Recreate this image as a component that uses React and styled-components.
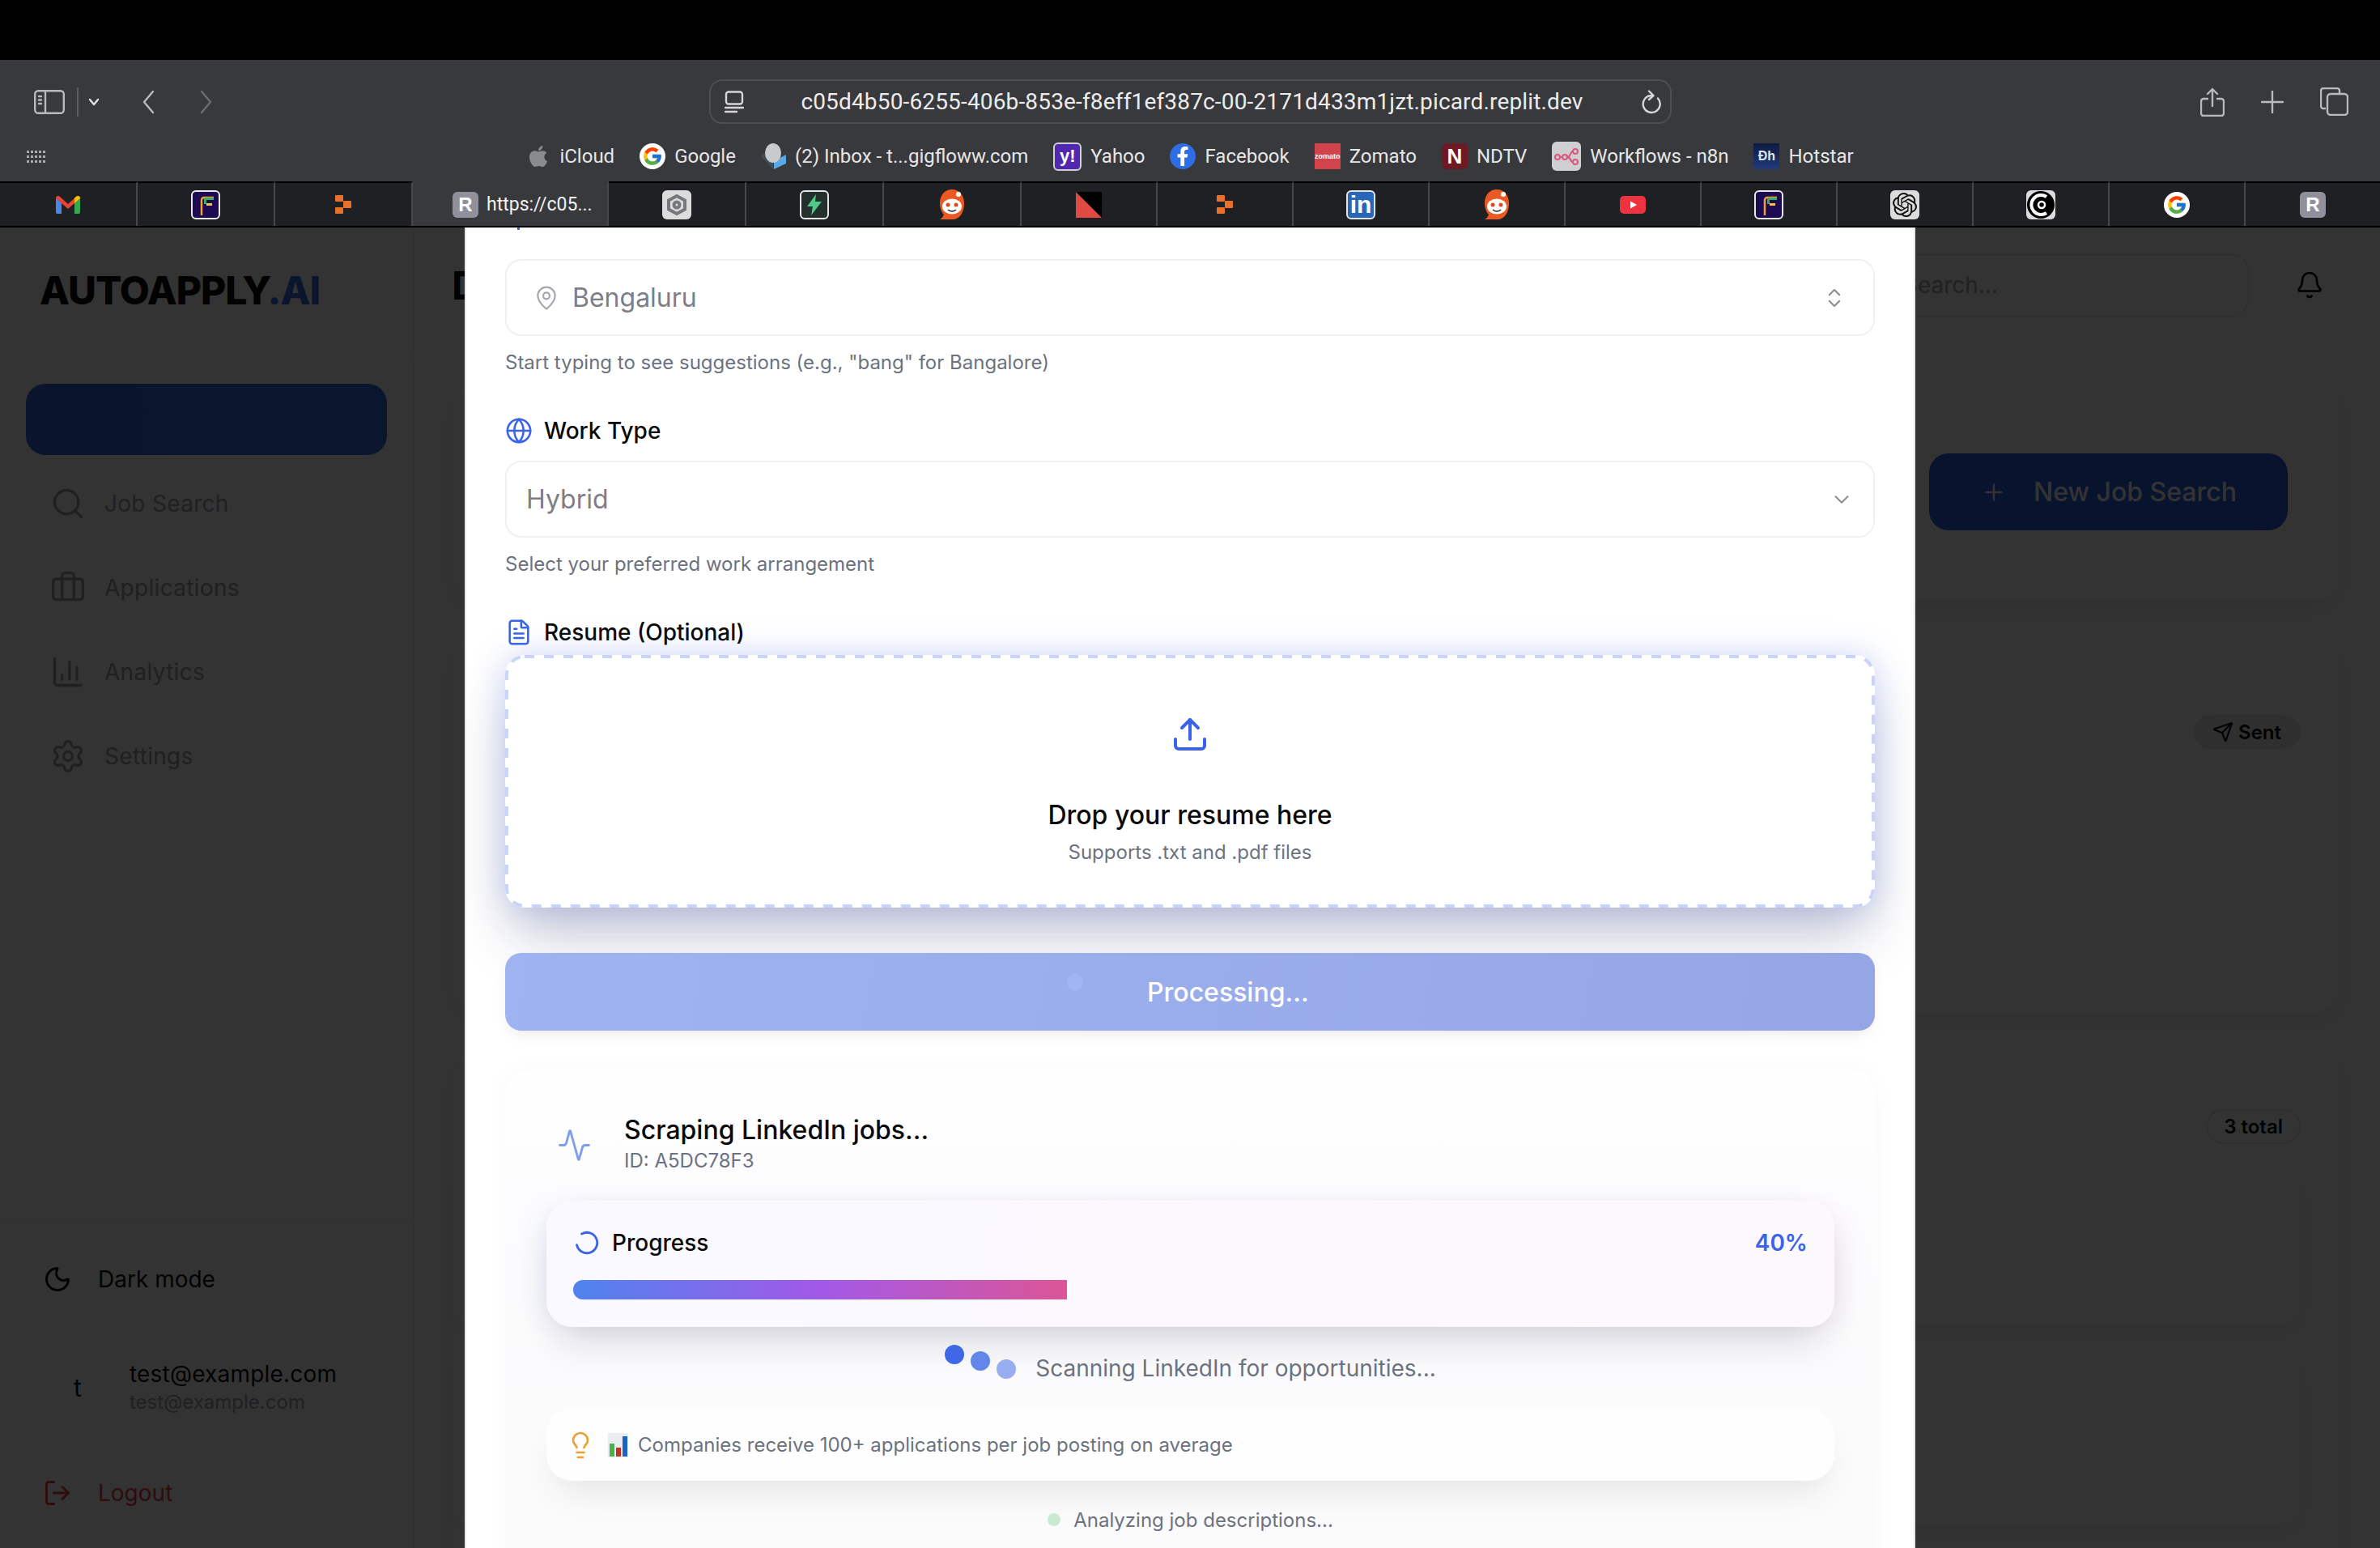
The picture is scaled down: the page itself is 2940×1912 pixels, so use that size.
import React from 'react';
import styled, { createGlobalStyle } from 'styled-components';
import {
  Activity, Bell, Briefcase, ChartColumn, ChevronDown, ChevronsUpDown, FileText, Globe, Lightbulb,
  LoaderCircle, LogOut, MapPin, Moon, Plus, Search, Send, Settings, Upload,
} from 'lucide-react';
import { FaApple, FaFacebookF } from 'react-icons/fa';
import { FcGoogle } from 'react-icons/fc';
import { SiOpenai } from 'react-icons/si';

const GlobalStyle = createGlobalStyle`
  html, body {
    margin: 0;
    padding: 0;
    background: #000;
  }
  * {
    box-sizing: border-box;
  }
`;

const Shell = styled.div`
  width: 2940px;
  height: 1912px;
  overflow: hidden;
  display: flex;
  flex-direction: column;
  font-family: Inter, sans-serif;
`;

const Notch = styled.div`
  flex: 0 0 74px;
  background: #000;
`;

/* browser chrome */
const Toolbar = styled.div`
  flex: 0 0 150px;
  background: #38393d;
  display: flex;
  flex-direction: column;
  font-family: Roboto, sans-serif;
  color: #e6e6e7;
`;

const NavRow = styled.div`
  flex: 0 0 92px;
  padding-top: 24px;
  display: grid;
  grid-template-columns: 1fr 1189px 1fr;
  align-items: start;
`;

const NavLeft = styled.div`
  height: 55px;
  padding-left: 42px;
  display: flex;
  align-items: center;
`;

const NavRight = styled.div`
  height: 55px;
  padding-right: 39px;
  display: flex;
  align-items: center;
  justify-content: flex-end;
  gap: 45px;
`;

const ChromeIcon = styled.svg`
  display: block;
  flex: none;
  fill: none;
  stroke: ${(p) => p.$color || '#b9babc'};
  stroke-width: 2.4;
  stroke-linecap: round;
  stroke-linejoin: round;
  margin-left: ${(p) => p.$ml || 0}px;
`;

const AddressBar = styled.div`
  height: 55px;
  border: 2px solid #4e4f53;
  border-radius: 16px;
  padding: 0 10px 0 17px;
  display: flex;
  align-items: center;
`;

const Url = styled.span`
  flex: 1;
  text-align: center;
  font-size: 28px;
  letter-spacing: 0.16px;
  color: #ececed;
  white-space: nowrap;
`;

const BookmarkRow = styled.div`
  flex: 0 0 54px;
  display: grid;
  grid-template-columns: 1fr auto 1fr;
  align-items: center;
`;

const AppsDots = styled.div`
  margin-left: 33px;
  width: 24px;
  display: grid;
  grid-template-columns: repeat(5, 3px);
  gap: 3px 2px;
`;

const AppsDot = styled.i`
  width: 3px;
  height: 3px;
  background: #a9aaad;
`;

const Bookmarks = styled.div`
  display: flex;
  align-items: center;
  gap: 31px;
`;

const Bookmark = styled.div`
  display: flex;
  align-items: center;
  gap: 11px;
  font-size: 24px;
  white-space: nowrap;
`;

const Tile = styled.div`
  width: ${(p) => p.$size || 32}px;
  height: ${(p) => p.$h || p.$size || 32}px;
  flex: none;
  border-radius: ${(p) => p.$radius ?? 6}px;
  background: ${(p) => p.$bg || 'transparent'};
  border: ${(p) => (p.$ring ? `2px solid ${p.$ring}` : 'none')};
  color: ${(p) => p.$fg || '#fff'};
  font-size: ${(p) => p.$font || 22}px;
  font-weight: 700;
  font-family: 'Liberation Sans', sans-serif;
  line-height: 1;
  overflow: hidden;
  display: flex;
  align-items: center;
  justify-content: center;
`;

const TabBar = styled.div`
  flex: 0 0 57px;
  display: flex;
  background: #1f2023;
  border-bottom: 2px solid #000;
  font-family: Roboto, sans-serif;
`;

const Tab = styled.div`
  flex: ${(p) => (p.$wide ? '0 0 170px' : '1 1 0')};
  border-top: 2px solid #000;
  border-right: 2px solid #47484b;
  display: flex;
  align-items: center;
  justify-content: center;
  &:last-child {
    border-right: none;
  }
`;

const ActiveTab = styled.div`
  flex: 0 0 242px;
  background: #38393d;
  border-top: 2px solid #38393d;
  border-right: 2px solid #47484b;
  padding-left: 49px;
  display: flex;
  align-items: center;
  gap: 10px;
  color: #f0f0f1;
  font-size: 23px;
  white-space: nowrap;
`;

/* dimmed dashboard behind the dialog */
const Page = styled.div`
  flex: 1;
  min-height: 0;
  position: relative;
  display: flex;
  background: #fff;
  overflow: hidden;
`;

const Sidebar = styled.aside`
  flex: 0 0 512px;
  border-right: 2px solid #f2f2f3;
  display: flex;
  flex-direction: column;
`;

const LogoBlock = styled.div`
  flex: 0 0 160px;
  padding: 0 0 4px 49px;
  display: flex;
  align-items: center;
  border-bottom: 2px solid #f2f2f3;
`;

const Logo = styled.div`
  font-size: 48px;
  font-weight: 800;
  letter-spacing: -1px;
  color: #0a0a0a;
  span {
    color: #3b71e6;
  }
`;

const Nav = styled.nav`
  padding: 33px 32px 0 32px;
  display: flex;
  flex-direction: column;
  gap: 16px;
`;

const NavItem = styled.div`
  height: 88px;
  border-radius: 24px;
  padding-left: 30px;
  display: flex;
  align-items: center;
  gap: 23px;
  font-size: 28px;
  letter-spacing: 0.3px;
  color: #9da0aa;
  background: ${(p) => (p.$active ? 'linear-gradient(90deg, #3269e1, #3470e6)' : 'transparent')};
`;

const SidebarFoot = styled.div`
  margin-top: auto;
  border-top: 2px solid #f2f2f3;
  padding: 25px 0 24px 53px;
  display: flex;
  flex-direction: column;
`;

const FootRow = styled.div`
  height: 88px;
  display: flex;
  align-items: center;
  gap: 32px;
  font-size: 28px;
  color: ${(p) => p.$color || '#0a0a0a'};
`;

const UserRow = styled.div`
  height: 88px;
  margin: 46px 0 42px 11px;
  display: flex;
  align-items: center;
  gap: 32px;
`;

const Avatar = styled.div`
  width: 64px;
  height: 64px;
  display: flex;
  align-items: center;
  justify-content: center;
  font-size: 30px;
  color: #0a0a0a;
`;

const UserMail = styled.div`
  font-size: 28px;
  line-height: 36px;
  letter-spacing: 0.2px;
  color: #0a0a0a;
`;

const UserSub = styled.div`
  font-size: 24px;
  line-height: 34px;
  color: #9ea1aa;
`;

const Main = styled.main`
  flex: 1;
  min-width: 0;
  display: flex;
  flex-direction: column;
`;

const MainHeader = styled.header`
  flex: 0 0 144px;
  padding: 0 51px 0 46px;
  border-bottom: 2px solid #f2f2f3;
  display: flex;
  align-items: center;
  justify-content: space-between;
`;

const PageTitle = styled.h1`
  margin: 0;
  font-size: 48px;
  font-weight: 700;
  color: #0a0a0a;
`;

const HeaderTools = styled.div`
  display: flex;
  align-items: center;
  gap: 38px;
`;

const SearchBox = styled.div`
  width: 513px;
  height: 79px;
  padding-left: 83px;
  border: 2px solid #ecedef;
  border-radius: 24px;
  display: flex;
  align-items: center;
  font-size: 28px;
  color: #a0a3ad;
`;

const BellButton = styled.div`
  width: 72px;
  display: flex;
  justify-content: center;
  color: #000;
`;

const Content = styled.div`
  padding: 48px 49px 0 48px;
  display: flex;
  flex-direction: column;
  gap: 48px;
`;

const Card = styled.section`
  height: ${(p) => p.$h}px;
  flex: none;
  border-radius: 32px;
  background: #fff;
  box-shadow: 0 10px 30px rgba(0, 0, 0, 0.07);
  padding: ${(p) => p.$pad || '0 49px 0 0'};
  display: flex;
  flex-direction: column;
  align-items: flex-end;
`;

const HeroCard = styled(Card)`
  justify-content: center;
  padding-right: 65px;
`;

const NewSearchButton = styled.div`
  width: 443px;
  height: 95px;
  border-radius: 24px;
  background: linear-gradient(100deg, #2a66e6, #2a5de0);
  color: #fff;
  font-size: 32px;
  font-weight: 500;
  display: flex;
  align-items: center;
  padding-left: 64px;
  gap: 33px;
`;

const Badge = styled.div`
  height: ${(p) => p.$h}px;
  padding: 0 ${(p) => p.$px}px;
  border-radius: 22px;
  border: 2px solid ${(p) => (p.$outline ? '#e8e8ea' : 'transparent')};
  background: ${(p) => (p.$outline ? 'transparent' : '#ececee')};
  display: flex;
  align-items: center;
  gap: 6px;
  font-size: 24px;
  font-weight: 600;
  color: #0a0a0a;
`;

const SubCard = styled.div`
  flex: none;
  width: 100%;
  height: ${(p) => p.$h}px;
  margin-top: ${(p) => p.$mt}px;
  border-radius: 24px;
  background: #fff;
  box-shadow: 0 10px 30px rgba(0, 0, 0, 0.06);
`;

const Scrim = styled.div`
  position: absolute;
  inset: 0;
  background: rgba(0, 0, 0, 0.8);
`;

/* dialog, scrolled part way down */
const Dialog = styled.div`
  position: absolute;
  top: 0;
  bottom: 0;
  left: 574px;
  width: 1792px;
  background: #fff;
  border: 2px solid #e6e7ea;
  border-width: 0 2px;
  padding: 39px 48px 0;
  overflow: hidden;
`;

const ScrollTip = styled.i`
  position: absolute;
  top: 0;
  left: 63px;
  width: 3px;
  height: 3px;
  background: #3b63e8;
`;

const Field = styled.div`
  height: 95px;
  margin-top: ${(p) => p.$mt || 0}px;
  border: 2px solid #f1f1f3;
  border-radius: 20px;
  padding: 0 ${(p) => p.$pr}px 0 ${(p) => p.$pl}px;
  display: flex;
  align-items: center;
  gap: 16px;
  font-size: 32px;
  color: #7d7e86;
`;

const FieldValue = styled.span`
  flex: 1;
`;

const Helper = styled.div`
  margin-top: 15px;
  font-size: 24px;
  line-height: 36px;
  color: #6b7280;
`;

const Label = styled.div`
  margin-top: 48px;
  height: 36px;
  display: flex;
  align-items: center;
  gap: 14px;
  font-size: 28px;
  font-weight: 500;
  color: #0a0a0a;
`;

const Dropzone = styled.div`
  position: relative;
  margin-top: 10px;
  height: 312px;
  border-radius: 24px;
  background: #fff;
  box-shadow: 0 0 40px rgba(88, 120, 240, 0.26), 0 40px 70px -10px rgba(30, 40, 90, 0.28);
  display: flex;
  flex-direction: column;
  align-items: center;
  padding-top: 74px;
  color: #3b63e8;
`;

const DashFrame = styled.svg`
  position: absolute;
  inset: 0;
  fill: none;
  stroke: #c9d4f8;
  stroke-width: 4;
  stroke-dasharray: 12 12;
`;

const DropTitle = styled.div`
  margin-top: 54px;
  font-size: 32px;
  line-height: 44px;
  font-weight: 500;
  color: #0a0a0a;
`;

const DropHint = styled.div`
  margin-top: 6px;
  font-size: 24px;
  line-height: 36px;
  color: #6b7280;
`;

const SubmitButton = styled.div`
  position: relative;
  margin-top: 56px;
  height: 96px;
  border-radius: 20px;
  background: linear-gradient(100deg, #9fb3f1, #95a6e5);
  box-shadow: 0 8px 20px -6px rgba(0, 0, 0, 0.1);
  padding-left: 793px;
  display: flex;
  align-items: center;
  font-size: 32px;
  font-weight: 500;
  color: #fff;
`;

const FaintDot = styled.i`
  position: absolute;
  left: ${(p) => p.$x}px;
  top: ${(p) => p.$y}px;
  width: 20px;
  height: 20px;
  border-radius: 50%;
  background: ${(p) => p.$color};
`;

const ProgressPanel = styled.section`
  margin-top: 48px;
  height: 760px;
  border-radius: 32px;
  background: linear-gradient(180deg, #fff 0%, #fcfcfe 22%, #fafafb 100%);
  box-shadow: 0 0 30px rgba(0, 0, 0, 0.03);
  padding: 55px 50px 0 51px;
`;

const PanelHead = styled.div`
  padding-left: 13px;
  display: flex;
  align-items: center;
  gap: 40px;
  color: #7f9cf0;
`;

const PanelTitle = styled.div`
  font-size: 32px;
  line-height: 40px;
  font-weight: 500;
  color: #0a0a0a;
`;

const PanelId = styled.div`
  font-size: 24px;
  line-height: 36px;
  color: #6b7280;
`;

const ProgressCard = styled.div`
  margin-top: 31px;
  height: 156px;
  border-radius: 32px;
  padding: 32px 33px 34px;
  background: linear-gradient(100deg, #f9f9ff, #fdf8fc);
  box-shadow: 0 25px 50px -12px rgba(20, 20, 50, 0.18), -14px 0 34px -10px rgba(59, 100, 246, 0.08),
    14px 0 34px -10px rgba(236, 72, 153, 0.08);
`;

const ProgressTop = styled.div`
  height: 40px;
  display: flex;
  align-items: center;
  gap: 14px;
  font-size: 28px;
  font-weight: 500;
  color: #0a0a0a;
  svg {
    transform: rotate(-120deg);
    color: #3b63e8;
  }
`;

const Percent = styled.span`
  margin-left: auto;
  font-weight: 600;
  color: #3b63e8;
`;

const Track = styled.div`
  margin-top: 26px;
  height: 24px;
  border-radius: 12px 0 0 12px;
`;

const Fill = styled.div`
  height: 100%;
  border-radius: 12px 0 0 12px;
  background: linear-gradient(90deg, #4f83ee, #a259e8 50%, #dc5596);
`;

const StatusRow = styled.div`
  margin-top: 31px;
  height: 40px;
  display: flex;
  align-items: center;
  justify-content: center;
  font-size: 28px;
  color: #6b7280;
`;

const BounceDot = styled.i`
  width: 24px;
  height: 24px;
  margin-right: ${(p) => p.$mr}px;
  border-radius: 50%;
  background: ${(p) => p.$color};
  transform: translateY(${(p) => p.$y}px);
`;

const TipCard = styled.div`
  margin-top: 30px;
  height: 89px;
  border-radius: 32px;
  padding-left: 24px;
  background: #fefefe;
  box-shadow: 0 24px 44px -14px rgba(0, 0, 0, 0.1);
  display: flex;
  align-items: center;
  font-size: 24px;
  color: #6b7280;
  svg {
    flex: none;
  }
`;

const TipBulb = styled.div`
  display: flex;
  color: #ef9f2e;
  margin-right: 16px;
`;

const TipChart = styled.svg`
  margin: 0 12px 0 0;
`;

const StepRow = styled.div`
  margin-top: 30px;
  height: 36px;
  display: flex;
  align-items: center;
  justify-content: center;
  gap: 16px;
  font-size: 24px;
  color: #6b7280;
`;

const StepDot = styled.i`
  width: 16px;
  height: 16px;
  border-radius: 50%;
  background: #c9e9d1;
`;

const OrangeMark = () => (
  <svg width="20" height="23" viewBox="0 0 20 23">
    <g fill="#e8702a">
      <rect x="0" y="0" width="10" height="8" rx="1" />
      <rect x="10" y="7" width="10" height="9" rx="1" />
      <rect x="0" y="15" width="10" height="8" rx="1" />
    </g>
  </svg>
);

const GmailMark = () => (
  <svg width="30" height="22" viewBox="0 0 30 22">
    <path d="M0 3v17a2 2 0 0 0 2 2h5V6z" fill="#4a86e8" />
    <path d="M30 3v17a2 2 0 0 1-2 2h-5V6z" fill="#34a853" />
    <path d="M0 3c0-3 3-4 5-2l10 9 10-9c2-2 5-1 5 2L15 16z" fill="#ea4335" />
    <path d="M23 2.500l2-1.500c2-2 5-1 5 2l-7 6z" fill="#fbbc04" />
  </svg>
);

const FlowMark = () => (
  <Tile $size={36} $bg="#1c0b52" $ring="#e9e9ea">
    <svg width="24" height="30" viewBox="0 0 24 30">
      <path d="M7 28V9a3 3 0 0 1 3-3h12" stroke="#f0a02c" strokeWidth="2.500" fill="none" />
      <path d="M10 14V8a2 2 0 0 1 2-2h10v3H13v5z" fill="#3ea86b" />
      <path d="M13 13h7v3h-7z" fill="#f5c542" />
    </svg>
  </Tile>
);

const RMark = () => (
  <Tile $bg="#8f909c" $font={24}>R</Tile>
);

const HexMark = () => (
  <Tile $size={36} $bg="#dcdcdc">
    <svg width="28" height="28" viewBox="0 0 28 28" fill="none" stroke="#77787c" strokeWidth="4">
      <path d="M14 3l10 5.500v11L14 25 4 19.500v-11z" />
      <circle cx="14" cy="14" r="3.500" />
    </svg>
  </Tile>
);

const BoltMark = () => (
  <Tile $size={36} $bg="#23302b" $ring="#e5e5e6">
    <svg width="22" height="26" viewBox="0 0 22 26">
      <path d="M13 0L2 15h7l-2 11 13-17h-8z" fill="#4ec98a" />
    </svg>
  </Tile>
);

const RedditMark = () => (
  <svg width="32" height="38" viewBox="0 0 32 38">
    <path d="M16 0C7 0 1 7 1 17c0 6 2 11 5 14-1 3-3 5-5 6h17c8-1 13-9 13-20C31 7 25 0 16 0z" fill="#ec5a24" />
    <ellipse cx="16" cy="21" rx="12" ry="9.500" fill="#fff" />
    <circle cx="11" cy="19" r="2.500" fill="#e0491c" />
    <circle cx="21" cy="19" r="2.500" fill="#e0491c" />
    <path d="M11 25c3 2.500 7 2.500 10 0" stroke="#222" strokeWidth="1.500" fill="none" />
    <circle cx="24" cy="6" r="3" fill="#fff" />
  </svg>
);

const TriangleMark = () => (
  <svg width="32" height="32" viewBox="0 0 32 32">
    <rect width="32" height="32" fill="#000" />
    <path d="M0 0l32 32H0z" fill="#df4b43" />
  </svg>
);

const LinkedInMark = () => (
  <Tile $size={36} $bg="#2867b8" $ring="#e4e4e5" $font={30}>in</Tile>
);

const YouTubeMark = () => (
  <svg width="32" height="22" viewBox="0 0 32 22">
    <rect width="32" height="22" rx="5" fill="#ee3340" />
    <path d="M13 6.500l8 4.500-8 4.500z" fill="#fff" />
  </svg>
);

const OpenAiMark = () => (
  <Tile $size={36} $bg="#dcdcdc" $fg="#111">
    <SiOpenai size={30} />
  </Tile>
);

const RingMark = () => (
  <Tile $size={36} $bg="#dcdcdc">
    <svg width="34" height="34" viewBox="0 0 34 34">
      <circle cx="17" cy="17" r="17" fill="#000" />
      <path d="M24 7a12 12 0 1 0 0 20" fill="none" stroke="#fff" strokeWidth="4" />
      <circle cx="18" cy="17" r="4" fill="none" stroke="#fff" strokeWidth="2.500" />
    </svg>
  </Tile>
);

const GoogleMark = () => (
  <Tile $size={32} $h={32} $radius={16} $bg="#fff">
    <FcGoogle size={26} />
  </Tile>
);

const tabs = [
  <GmailMark />, <FlowMark />, <OrangeMark />, null, <HexMark />, <BoltMark />, <RedditMark />, <TriangleMark />,
  <OrangeMark />, <LinkedInMark />, <RedditMark />, <YouTubeMark />, <FlowMark />, <OpenAiMark />, <RingMark />,
  <GoogleMark />, <RMark />,
];

const bookmarks = [
  { name: 'iCloud', icon: <FaApple size={30} color="#8a8b8e" /> },
  { name: 'Google', icon: <GoogleMark /> },
  {
    name: '(2) Inbox - t...gigfloww.com',
    icon: (
      <svg width="31" height="32" viewBox="0 0 31 32">
        <path d="M0 16l15 16V22L4 12z" fill="#3e4d58" />
        <path d="M31 14v11l-15 7V22z" fill="#5aa9e6" />
        <ellipse cx="15" cy="12" rx="10" ry="12" fill="#c9cacc" />
      </svg>
    ),
  },
  { name: 'Yahoo', icon: <Tile $size={35} $bg="#5128b0" $ring="#cfcfd2" $font={22}>y!</Tile> },
  {
    name: 'Facebook',
    icon: <Tile $radius={16} $bg="#2d6ee6"><FaFacebookF size={24} /></Tile>,
  },
  { name: 'Zomato', icon: <Tile $radius={0} $bg="#d2444c" $font={9}>zomato</Tile> },
  { name: 'NDTV', icon: <Tile $bg="#6d1a24" $font={26}>N</Tile> },
  {
    name: 'Workflows - n8n',
    icon: (
      <Tile $size={36} $bg="#cfcfd1">
        <svg width="30" height="22" viewBox="0 0 30 22" fill="none" stroke="#d9577f" strokeWidth="2">
          <circle cx="4" cy="12" r="3" />
          <circle cx="13" cy="12" r="3" />
          <circle cx="26" cy="5" r="3" />
          <circle cx="26" cy="18" r="3" />
          <path d="M7 12h3M16 12c5 0 3-7 7-7M16 12c5 0 3 6 7 6" />
        </svg>
      </Tile>
    ),
  },
  {
    name: 'Hotstar',
    icon: <Tile $radius={0} $bg="linear-gradient(180deg, #0d1a3e, #223a7c)" $font={16} $fg="#dfe3f0">Ðh</Tile>,
  },
];

const dotIndexes = Array.from({ length: 15 }, (_, i) => i);

export default function App() {
  return (
    <Shell>
      <GlobalStyle />
      <Notch />
      <Toolbar>
        <NavRow>
          <NavLeft>
            <ChromeIcon width="38" height="30" viewBox="0 0 38 30">
              <rect x="1.200" y="1.200" width="35.600" height="27.600" rx="4" />
              <path d="M14 1.500v27M6 8h3M6 12.500h3M6 17h3" />
            </ChromeIcon>
            <ChromeIcon width="2" height="36" viewBox="0 0 2 36" $color="#5b5c60" $ml={15}>
              <path d="M1 0v36" />
            </ChromeIcon>
            <ChromeIcon width="14" height="10" viewBox="0 0 14 10" $color="#e0e0e1" $ml={12}>
              <path d="M2 2l5 6 5-6" />
            </ChromeIcon>
            <ChromeIcon width="16" height="30" viewBox="0 0 16 30" $ml={52}>
              <path d="M14 2L3 15l11 13" />
            </ChromeIcon>
            <ChromeIcon width="16" height="30" viewBox="0 0 16 30" $color="#6b6c70" $ml={56}>
              <path d="M2 2l11 13L2 28" />
            </ChromeIcon>
          </NavLeft>
          <AddressBar>
            <ChromeIcon width="24" height="28" viewBox="0 0 24 28" $color="#d6d6d8">
              <rect x="2" y="1.500" width="20" height="15" rx="3" />
              <path d="M1 21h22M1 26h14" />
            </ChromeIcon>
            <Url>c05d4b50-6255-406b-853e-f8eff1ef387c-00-2171d433m1jzt.picard.replit.dev</Url>
            <ChromeIcon width="26" height="30" viewBox="0 0 26 30" $color="#d6d6d8">
              <path d="M21 10.500A10.500 10.500 0 1 1 13 7M10 1.500l5.500 5.500-5.500 5" />
            </ChromeIcon>
          </AddressBar>
          <NavRight>
            <ChromeIcon width="30" height="36" viewBox="0 0 30 36">
              <path d="M9 14H4a3 3 0 0 0-3 3v15a3 3 0 0 0 3 3h22a3 3 0 0 0 3-3V17a3 3 0 0 0-3-3h-5M15 23V2M9 8l6-6 6 6" />
            </ChromeIcon>
            <ChromeIcon width="28" height="28" viewBox="0 0 28 28">
              <path d="M14 1v26M1 14h26" />
            </ChromeIcon>
            <ChromeIcon width="35" height="35" viewBox="0 0 35 35">
              <path d="M6 26H4a3 3 0 0 1-3-3V4a3 3 0 0 1 3-3h17a3 3 0 0 1 3 3v4" />
              <rect x="9" y="8" width="25" height="26" rx="4" />
            </ChromeIcon>
          </NavRight>
        </NavRow>
        <BookmarkRow>
          <AppsDots>
            {dotIndexes.map((i) => (
              <AppsDot key={i} />
            ))}
          </AppsDots>
          <Bookmarks>
            {bookmarks.map((b) => (
              <Bookmark key={b.name}>
                {b.icon}
                {b.name}
              </Bookmark>
            ))}
          </Bookmarks>
        </BookmarkRow>
      </Toolbar>
      <TabBar>
        {tabs.map((icon, i) =>
          icon ? (
            <Tab key={i} $wide={i < 7}>{icon}</Tab>
          ) : (
            <ActiveTab key={i}>
              <RMark />
              https://c05...
            </ActiveTab>
          )
        )}
      </TabBar>
      <Page>
        <Sidebar>
          <LogoBlock>
            <Logo>
              AUTOAPPLY<span>.AI</span>
            </Logo>
          </LogoBlock>
          <Nav>
            <NavItem $active />
            <NavItem>
              <Search size={44} strokeWidth={1.8} />
              Job Search
            </NavItem>
            <NavItem>
              <Briefcase size={44} strokeWidth={1.8} />
              Applications
            </NavItem>
            <NavItem>
              <ChartColumn size={44} strokeWidth={1.8} />
              Analytics
            </NavItem>
            <NavItem>
              <Settings size={44} strokeWidth={1.8} />
              Settings
            </NavItem>
          </Nav>
          <SidebarFoot>
            <FootRow>
              <Moon size={36} />
              Dark mode
            </FootRow>
            <UserRow>
              <Avatar>t</Avatar>
              <div>
                <UserMail>test@example.com</UserMail>
                <UserSub>test@example.com</UserSub>
              </div>
            </UserRow>
            <FootRow $color="#ef4444">
              <LogOut size={36} />
              Logout
            </FootRow>
          </SidebarFoot>
        </Sidebar>
        <Main>
          <MainHeader>
            <PageTitle>D</PageTitle>
            <HeaderTools>
              <SearchBox>Search...</SearchBox>
              <BellButton>
                <Bell size={36} strokeWidth={1.8} />
              </BellButton>
            </HeaderTools>
          </MainHeader>
          <Content>
            <HeroCard $h={269}>
              <NewSearchButton>
                <Plus size={32} strokeWidth={1.8} />
                New Job Search
              </NewSearchButton>
            </HeroCard>
            <Card $h={460} $pad="93px 49px 0 0">
              <Badge $h={42} $px={22}>
                <Send size={26} />
                Sent
              </Badge>
            </Card>
            <Card $h={660} $pad="72px 49px 0 0">
              <Badge $h={43} $px={20} $outline>
                3 total
              </Badge>
              <SubCard $h={196} $mt={27} />
              <SubCard $h={213} $mt={34} />
            </Card>
          </Content>
        </Main>
        <Scrim />
        <Dialog>
          <ScrollTip />
          <Field $pl={33} $pr={33}>
            <MapPin size={32} color="#a5a6ac" strokeWidth={1.6} />
            <FieldValue>Bengaluru</FieldValue>
            <ChevronsUpDown size={30} color="#8b8c93" strokeWidth={1.6} />
          </Field>
          <Helper>Start typing to see suggestions (e.g., &quot;bang&quot; for Bangalore)</Helper>
          <Label>
            <Globe size={34} color="#3b63e8" strokeWidth={1.8} />
            Work Type
          </Label>
          <Field $mt={19} $pl={24} $pr={24}>
            <FieldValue>Hybrid</FieldValue>
            <ChevronDown size={30} color="#8b8c93" strokeWidth={1.6} />
          </Field>
          <Helper>Select your preferred work arrangement</Helper>
          <Label>
            <FileText size={34} color="#3b63e8" strokeWidth={1.8} />
            Resume (Optional)
          </Label>
          <Dropzone>
            <DashFrame width="100%" height="100%">
              <rect x="2" y="2" width="1688" height="308" rx="22" />
            </DashFrame>
            <Upload size={48} strokeWidth={2} />
            <DropTitle>Drop your resume here</DropTitle>
            <DropHint>Supports .txt and .pdf files</DropHint>
          </Dropzone>
          <SubmitButton>
            <FaintDot $x={694} $y={26} $color="#a2b5f2" />
            <FaintDot $x={728} $y={42} $color="#99adec" />
            Processing...
          </SubmitButton>
          <ProgressPanel>
            <PanelHead>
              <Activity size={43} strokeWidth={1.6} />
              <div>
                <PanelTitle>Scraping LinkedIn jobs...</PanelTitle>
                <PanelId>ID: A5DC78F3</PanelId>
              </div>
            </PanelHead>
            <ProgressCard>
              <ProgressTop>
                <LoaderCircle size={34} strokeWidth={2} />
                Progress
                <Percent>40%</Percent>
              </ProgressTop>
              <Track>
                <Fill style={{ width: '40%' }} />
              </Track>
            </ProgressCard>
            <StatusRow>
              <BounceDot $color="#3e68e6" $y={-17} $mr={8} />
              <BounceDot $color="#6286e9" $y={-9} $mr={8} />
              <BounceDot $color="#98adef" $y={1} $mr={24} />
              Scanning LinkedIn for opportunities...
            </StatusRow>
            <TipCard>
              <TipBulb>
                <Lightbulb size={36} strokeWidth={1.8} />
              </TipBulb>
              <TipChart width="25" height="30" viewBox="0 0 25 30">
                <rect width="25" height="30" fill="#e9edf1" />
                <rect x="2" y="13" width="6" height="16" fill="#4caf50" />
                <rect x="10" y="18" width="6" height="11" fill="#c62f23" />
                <rect x="18" y="4" width="6" height="25" fill="#1e62c4" />
              </TipChart>
              Companies receive 100+ applications per job posting on average
            </TipCard>
            <StepRow>
              <StepDot />
              Analyzing job descriptions...
            </StepRow>
          </ProgressPanel>
        </Dialog>
      </Page>
    </Shell>
  );
}
